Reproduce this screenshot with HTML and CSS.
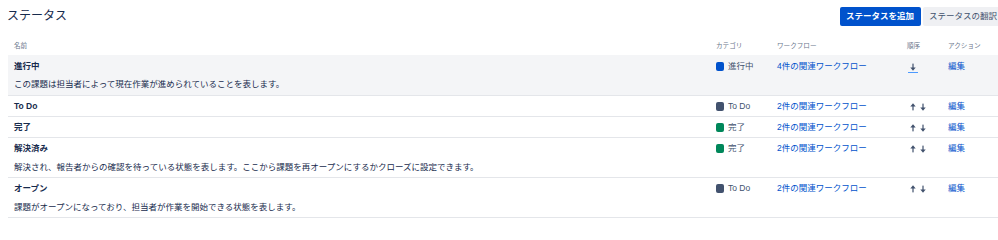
FILE: index.html
```html
<!DOCTYPE html>
<html lang="ja">
<head>
<meta charset="utf-8">
<title>ステータス</title>
<link rel="stylesheet" href="styles.css">
</head>
<body>
<div class="page">
  <div class="page-header">
    <h1 class="page-title">ステータス</h1>
    <div class="actions">
      <button class="btn btn-primary">ステータスを追加</button>
      <button class="btn btn-default">ステータスの翻訳</button>
    </div>
  </div>
  <table class="status-table">
    <colgroup>
      <col class="c-name"><col class="c-cat"><col class="c-wf"><col class="c-order"><col class="c-act">
    </colgroup>
    <thead>
      <tr><th>名前</th><th>カテゴリ</th><th>ワークフロー</th><th>順序</th><th>アクション</th></tr>
    </thead>
    <tbody>
      <tr class="row-active">
        <td><div class="name">進行中</div><div class="desc">この課題は担当者によって現在作業が進められていることを表します。</div></td>
        <td><div class="cat"><span class="sq sq-blue"></span>進行中</div></td>
        <td><div class="cell"><a class="link" href="#">4件の関連ワークフロー</a></div></td>
        <td><div class="order"><a class="arrow-link" href="#"><svg class="arrow" viewBox="0 0 8 10"><polygon points="4,10 7.6,5.6 0.4,5.6"/><rect x="3.2" y="0.5" width="1.6" height="6"/></svg></a></div></td>
        <td><div class="cell"><a class="link" href="#">編集</a></div></td>
      </tr>
      <tr>
        <td><div class="name">To Do</div></td>
        <td><div class="cat"><span class="sq sq-grey"></span>To Do</div></td>
        <td><div class="cell"><a class="link" href="#">2件の関連ワークフロー</a></div></td>
        <td><div class="order"><svg class="arrow" viewBox="0 0 8 10"><polygon points="4,0 7.6,4.4 0.4,4.4"/><rect x="3.2" y="3.5" width="1.6" height="6"/></svg><svg class="arrow" viewBox="0 0 8 10"><polygon points="4,10 7.6,5.6 0.4,5.6"/><rect x="3.2" y="0.5" width="1.6" height="6"/></svg></div></td>
        <td><div class="cell"><a class="link" href="#">編集</a></div></td>
      </tr>
      <tr>
        <td><div class="name">完了</div></td>
        <td><div class="cat"><span class="sq sq-green"></span>完了</div></td>
        <td><div class="cell"><a class="link" href="#">2件の関連ワークフロー</a></div></td>
        <td><div class="order"><svg class="arrow" viewBox="0 0 8 10"><polygon points="4,0 7.6,4.4 0.4,4.4"/><rect x="3.2" y="3.5" width="1.6" height="6"/></svg><svg class="arrow" viewBox="0 0 8 10"><polygon points="4,10 7.6,5.6 0.4,5.6"/><rect x="3.2" y="0.5" width="1.6" height="6"/></svg></div></td>
        <td><div class="cell"><a class="link" href="#">編集</a></div></td>
      </tr>
      <tr>
        <td><div class="name">解決済み</div><div class="desc">解決され、報告者からの確認を待っている状態を表します。ここから課題を再オープンにするかクローズに設定できます。</div></td>
        <td><div class="cat"><span class="sq sq-green"></span>完了</div></td>
        <td><div class="cell"><a class="link" href="#">2件の関連ワークフロー</a></div></td>
        <td><div class="order"><svg class="arrow" viewBox="0 0 8 10"><polygon points="4,0 7.6,4.4 0.4,4.4"/><rect x="3.2" y="3.5" width="1.6" height="6"/></svg><svg class="arrow" viewBox="0 0 8 10"><polygon points="4,10 7.6,5.6 0.4,5.6"/><rect x="3.2" y="0.5" width="1.6" height="6"/></svg></div></td>
        <td><div class="cell"><a class="link" href="#">編集</a></div></td>
      </tr>
      <tr>
        <td><div class="name">オープン</div><div class="desc">課題がオープンになっており、担当者が作業を開始できる状態を表します。</div></td>
        <td><div class="cat"><span class="sq sq-grey"></span>To Do</div></td>
        <td><div class="cell"><a class="link" href="#">2件の関連ワークフロー</a></div></td>
        <td><div class="order"><svg class="arrow" viewBox="0 0 8 10"><polygon points="4,0 7.6,4.4 0.4,4.4"/><rect x="3.2" y="3.5" width="1.6" height="6"/></svg><svg class="arrow" viewBox="0 0 8 10"><polygon points="4,10 7.6,5.6 0.4,5.6"/><rect x="3.2" y="0.5" width="1.6" height="6"/></svg></div></td>
        <td><div class="cell"><a class="link" href="#">編集</a></div></td>
      </tr>
    </tbody>
  </table>
</div>
</body>
</html>
```
FILE: styles.css
```css
html, body {
  margin: 0;
  padding: 0;
  overflow: hidden;
  background: #ffffff;
}
body {
  font-family: "Liberation Sans", "Noto Sans CJK JP", sans-serif;
  color: #172b4d;
  font-size: 8.5px;
  line-height: 13px;
}
.page {
  width: 1000px;
  margin-left: 8px;
}
.page-header {
  display: flex;
  align-items: center;
  justify-content: space-between;
  padding-top: 7px;
  padding-right: 4px;
  margin-bottom: 10px;
  height: 19px;
}
.page-title {
  margin: 0 0 0 -1px;
  font-size: 12px;
  font-weight: normal;
  line-height: 19px;
  color: #172b4d;
}
.actions {
  display: flex;
  gap: 2px;
}
.btn {
  font-family: inherit;
  font-size: 8.5px;
  line-height: 13px;
  height: 19px;
  border: 0;
  border-radius: 2px;
  padding: 3px 7px 3px 6px;
  margin: 0;
}
.btn-primary {
  background: #0052cc;
  color: #ffffff;
  font-weight: bold;
}
.btn-default {
  background: #eff0f3;
  color: #42526e;
}
.status-table {
  width: 1000px;
  table-layout: fixed;
  border-collapse: collapse;
}
.c-name { width: 702px; }
.c-cat { width: 61px; }
.c-wf { width: 130px; }
.c-order { width: 41px; }
.c-act { width: 66px; }
.status-table th {
  text-align: left;
  font-weight: normal;
  font-size: 6.6px;
  color: #6b778c;
  padding: 3px 6px;
  line-height: 13px;
  height: 13px;
}
.status-table td {
  vertical-align: top;
  padding: 4px 6px 3px;
  border-bottom: 1px solid #e4e6ea;
}
.row-active td {
  background: #f4f5f7;
  padding-top: 5px;
  padding-bottom: 4px;
}
.name {
  font-weight: bold;
  height: 13px;
}
.cell {
  height: 13px;
  white-space: nowrap;
}
.desc {
  margin-top: 6px;
  height: 13px;
  white-space: nowrap;
}
.row-active .desc {
  margin-top: 5px;
}
.cat {
  display: flex;
  align-items: center;
  gap: 4px;
  height: 13px;
  color: #42526e;
  white-space: nowrap;
}
.sq {
  display: block;
  flex: none;
  width: 8px;
  height: 9px;
  border-radius: 2px;
}
.sq-blue { background: #0052cc; }
.sq-grey { background: #42526e; }
.sq-green { background: #00875a; }
.link {
  color: #0052cc;
  text-decoration: none;
}
.order {
  display: flex;
  align-items: center;
  gap: 4px;
  margin-left: 3px;
  height: 13px;
}
.arrow {
  width: 6px;
  height: 8px;
  fill: #42526e;
  display: block;
  flex: none;
}
.arrow-link {
  display: block;
  padding: 2px 2px 1px;
  margin-left: -2px;
  border-bottom: 1px solid #4c9aff;
  line-height: 0;
}
```
